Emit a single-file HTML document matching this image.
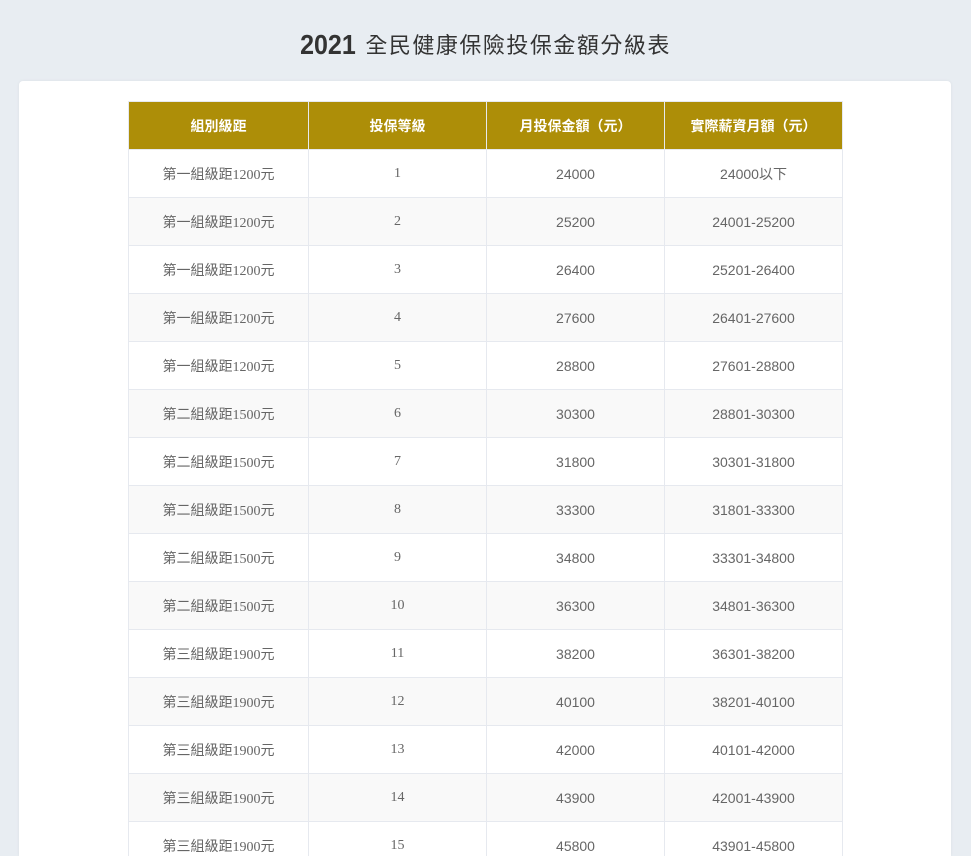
<!DOCTYPE html>
<html><head><meta charset="utf-8">
<style>
html,body{margin:0;padding:0;background:#e8edf2;width:971px;height:856px;overflow:hidden}
h1{margin:0;position:absolute;top:28px;left:0;width:971px;text-align:center;font:400 22px "Liberation Sans","Noto Sans CJK TC",sans-serif;color:#333;letter-spacing:1.5px;line-height:34px}
h1 b{display:inline-block;font-family:"Liberation Sans Narrow","Liberation Sans",sans-serif;font-weight:700;font-size:25px;letter-spacing:0;transform:scaleY(1.1);margin-right:2px}
.card{position:absolute;left:19px;top:81px;width:932px;height:775px;background:#fff;border-radius:4px 4px 0 0;box-shadow:0 0 3px rgba(0,0,0,.06);overflow:hidden}
table{position:absolute;left:109px;top:20px;border-collapse:collapse;table-layout:fixed;width:714px}
th,td{height:47px;border:1px solid #e6e9ef;text-align:center;padding:0;font-size:14px;color:#666}
th{background:#ad8e08;color:#fff;font-weight:700;font-family:"Liberation Sans","Noto Sans CJK TC",sans-serif;border-color:#e6e9ef;height:47px}
td.s{font-family:"Liberation Serif","Noto Sans CJK TC",serif}
td.n{font-family:"Liberation Sans","Noto Sans CJK TC",sans-serif}
tr:nth-child(even) td{background:#f9f9f9}
</style></head><body>
<h1><b>2021</b> 全民健康保險投保金額分級表</h1>
<div class="card">
<table>
<colgroup><col style="width:180px"><col style="width:178px"><col style="width:178px"><col style="width:178px"></colgroup>
<thead><tr><th>組別級距</th><th>投保等級</th><th>月投保金額（元）</th><th>實際薪資月額（元）</th></tr></thead>
<tbody>
<tr><td class="s">第一組級距1200元</td><td class="s">1</td><td class="n">24000</td><td class="n">24000以下</td></tr>
<tr><td class="s">第一組級距1200元</td><td class="s">2</td><td class="n">25200</td><td class="n">24001-25200</td></tr>
<tr><td class="s">第一組級距1200元</td><td class="s">3</td><td class="n">26400</td><td class="n">25201-26400</td></tr>
<tr><td class="s">第一組級距1200元</td><td class="s">4</td><td class="n">27600</td><td class="n">26401-27600</td></tr>
<tr><td class="s">第一組級距1200元</td><td class="s">5</td><td class="n">28800</td><td class="n">27601-28800</td></tr>
<tr><td class="s">第二組級距1500元</td><td class="s">6</td><td class="n">30300</td><td class="n">28801-30300</td></tr>
<tr><td class="s">第二組級距1500元</td><td class="s">7</td><td class="n">31800</td><td class="n">30301-31800</td></tr>
<tr><td class="s">第二組級距1500元</td><td class="s">8</td><td class="n">33300</td><td class="n">31801-33300</td></tr>
<tr><td class="s">第二組級距1500元</td><td class="s">9</td><td class="n">34800</td><td class="n">33301-34800</td></tr>
<tr><td class="s">第二組級距1500元</td><td class="s">10</td><td class="n">36300</td><td class="n">34801-36300</td></tr>
<tr><td class="s">第三組級距1900元</td><td class="s">11</td><td class="n">38200</td><td class="n">36301-38200</td></tr>
<tr><td class="s">第三組級距1900元</td><td class="s">12</td><td class="n">40100</td><td class="n">38201-40100</td></tr>
<tr><td class="s">第三組級距1900元</td><td class="s">13</td><td class="n">42000</td><td class="n">40101-42000</td></tr>
<tr><td class="s">第三組級距1900元</td><td class="s">14</td><td class="n">43900</td><td class="n">42001-43900</td></tr>
<tr><td class="s">第三組級距1900元</td><td class="s">15</td><td class="n">45800</td><td class="n">43901-45800</td></tr>
</tbody></table>
</div>
</body></html>
